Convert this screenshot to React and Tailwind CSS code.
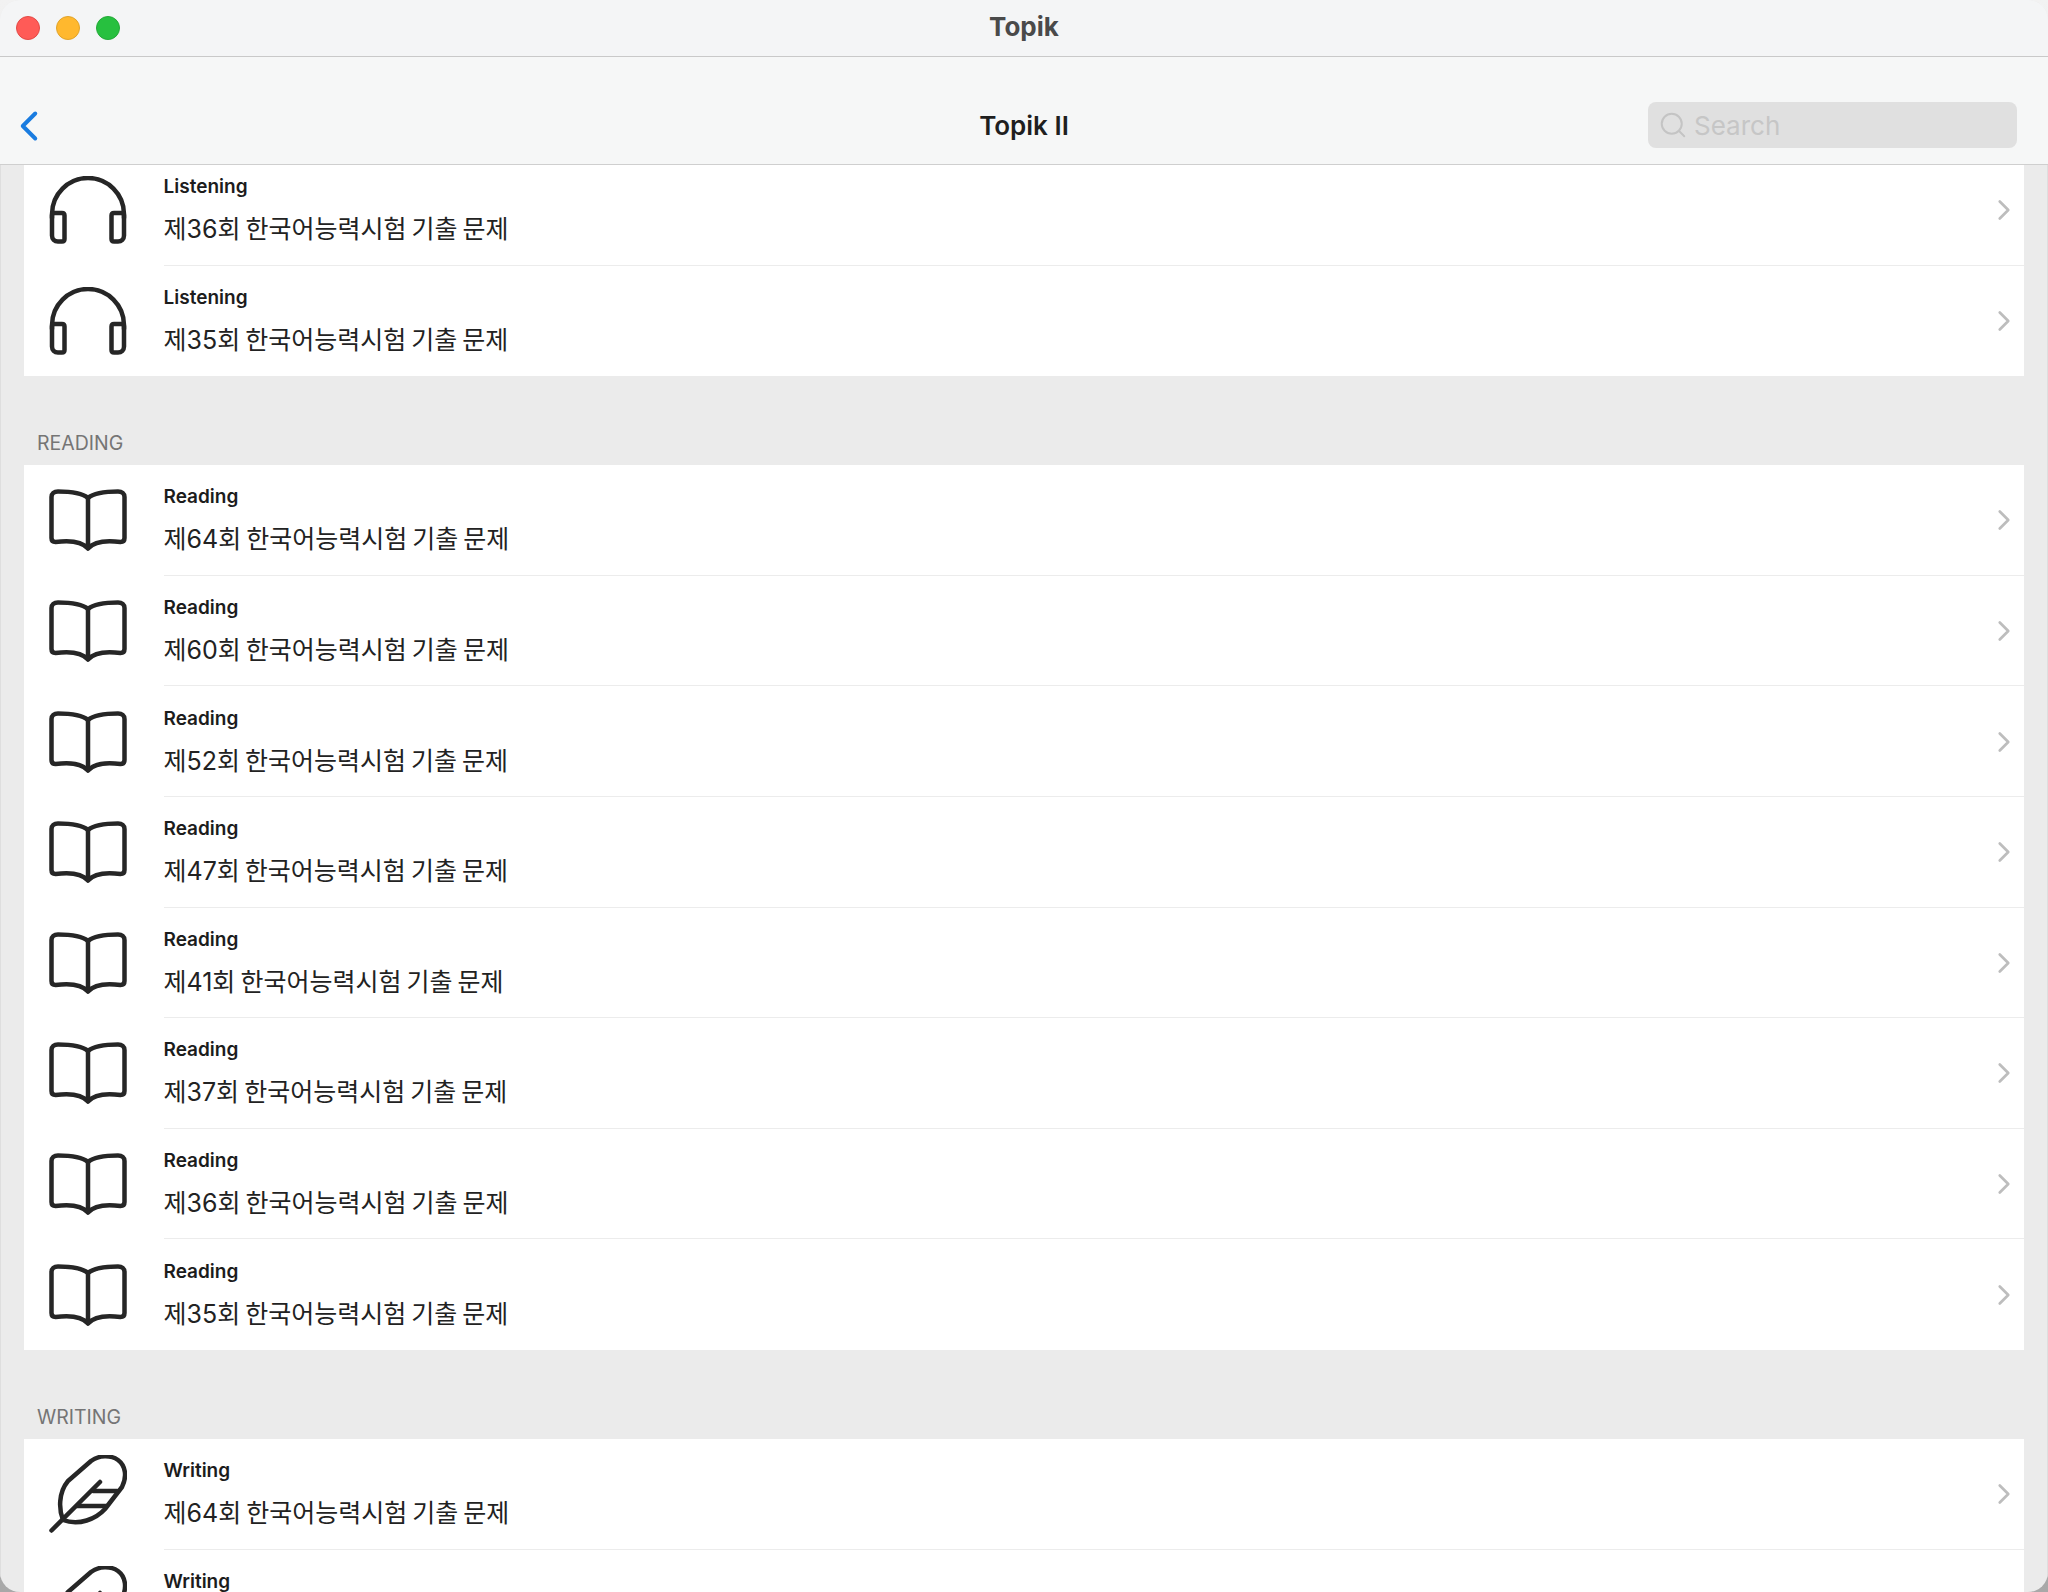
import React from 'react';
import { ChevronRight, ChevronLeft, Search } from 'lucide-react';

const Headphones = () => (
  <svg width="78" height="68" viewBox="0 0 78 68" fill="none" stroke="#262626" strokeWidth="4.5" strokeLinecap="round" strokeLinejoin="round">
    <path d="M3 42V38A36 36 0 0 1 75 38V42" />
    <path d="M3 39.500c0-1.500 1-2.500 2.500-2.500H13c1.500 0 2.500 1 2.500 2.500V63c0 1.500-1 2.500-2.500 2.500H9c-3.500 0-6-2.500-6-6z" />
    <path d="M75 39.500c0-1.500-1-2.500-2.500-2.500H65c-1.500 0-2.500 1-2.500 2.500V63c0 1.500 1 2.500 2.500 2.500h4c3.500 0 6-2.500 6-6z" />
  </svg>
);

const Book = () => (
  <svg width="78" height="62" viewBox="0 0 78 62" fill="none" stroke="#262626" strokeWidth="4.5" strokeLinecap="round" strokeLinejoin="round">
    <path d="M39 9C33 4 24 2.500 9 2.500 5 2.500 2.500 4.500 2.500 8v41c0 3 2 4 4 4 15-2 26-1 32.500 6.500C45.500 52 56.500 51 71.500 53c2 0 4-1 4-4V8c0-3.500-2.500-5.500-6.500-5.500C54 2.500 45 4 39 9z" />
    <path d="M39 9v50" />
  </svg>
);

const Feather = () => (
  <svg width="78" height="78" viewBox="0 0 78 78" fill="none" stroke="#262626" strokeWidth="4.5" strokeLinecap="round" strokeLinejoin="round">
    <path d="M2.500 75.500L51 27" />
    <path d="M14 65C10 55 9 38 19 26L42 6C50 0 62 0 69 5C77 11 78 22 73 32L56 54C47 64 30 71 14 65z" />
    <path d="M44 36H68" />
    <path d="M28 51H57" />
  </svg>
);

const icons = { Listening: Headphones, Reading: Book, Writing: Feather };

const Row = ({ kind, round, last }) => {
  const Icon = icons[kind];
  return (
    <div className="flex h-[110.6px] items-stretch">
      <div className="flex w-[139.5px] shrink-0 items-center pl-[25px]">
        <Icon />
      </div>
      <div className={`flex min-w-0 flex-1 items-center justify-between ${last ? '' : 'border-b border-[#ececec]'}`}>
        <div className="flex flex-col pt-[4px]">
          <span className="text-[19px] leading-[24px] font-semibold text-[#1c1c1c]">{kind}</span>
          <span className="mt-[11px] text-[25px] leading-[38px] text-[#222222] [word-spacing:-2px]">제{round}회 한국어능력시험 기출 문제</span>
        </div>
        <ChevronRight size={34} strokeWidth={1.9} className="mt-[1px] mr-[3px] text-[#bdbdbd]" />
      </div>
    </div>
  );
};

const Section = ({ title, kind, rounds }) => (
  <section>
    {title && (
      <div className="flex h-[89px] items-end pb-[9px] pl-[13px] text-[19.5px] leading-[26px] text-[#757575]">{title}</div>
    )}
    <div className="bg-white">
      {rounds.map((round, i) => (
        <Row key={round} kind={kind} round={round} last={i === rounds.length - 1} />
      ))}
    </div>
  </section>
);

export default function App() {
  return (
    <div className="h-[1592px] w-[2048px] overflow-hidden bg-gradient-to-b from-[#f2f2f2] to-[#a8a8a8] font-['Inter','Noto_Sans_CJK_KR',sans-serif]">
      <div className="flex h-full flex-col overflow-hidden rounded-[20px] bg-[#ebebeb]">
        <header className="relative flex h-[57px] shrink-0 items-center border-b border-[#c9c9c9] bg-[#f4f5f6]">
          <div className="flex gap-[16px] pl-[16px]">
            <span className="h-[24px] w-[24px] rounded-full border border-[#e24a46] bg-[#ff5b57]" />
            <span className="h-[24px] w-[24px] rounded-full border border-[#e0a32a] bg-[#ffb82e]" />
            <span className="h-[24px] w-[24px] rounded-full border border-[#24a938] bg-[#27c03f]" />
          </div>
          <h1 className="absolute inset-x-0 bottom-[12px] text-center text-[26px] leading-[34px] font-bold text-[#4a4a4a]">Topik</h1>
        </header>
        <nav className="relative flex h-[108px] shrink-0 items-end border-b border-[#cfcfcf] bg-[#f6f7f7] pb-[16px]">
          <ChevronLeft size={50} strokeWidth={1.9} className="absolute bottom-[13px] left-[4px] text-[#1a7ce0]" />
          <h2 className="absolute bottom-[21px] inset-x-0 text-center text-[26px] leading-[34px] font-semibold text-[#1f1f1f]">Topik II</h2>
          <div className="ml-auto mr-[31px] flex h-[46px] w-[369px] items-center rounded-[8px] bg-[#e0e0e0] pl-[10px]">
            <Search size={30} strokeWidth={1.6} className="text-[#c4c4c4]" />
            <span className="ml-[6px] text-[26px] text-[#c6c6c6]">Search</span>
          </div>
        </nav>
        <main className="min-h-0 flex-1 overflow-hidden border-x border-[#dedede] px-[23px]">
          <div className="-mt-[10px]">
            <Section kind="Listening" rounds={[36, 35]} />
            <Section title="READING" kind="Reading" rounds={[64, 60, 52, 47, 41, 37, 36, 35]} />
            <Section title="WRITING" kind="Writing" rounds={[64, 60]} />
          </div>
        </main>
      </div>
    </div>
  );
}
